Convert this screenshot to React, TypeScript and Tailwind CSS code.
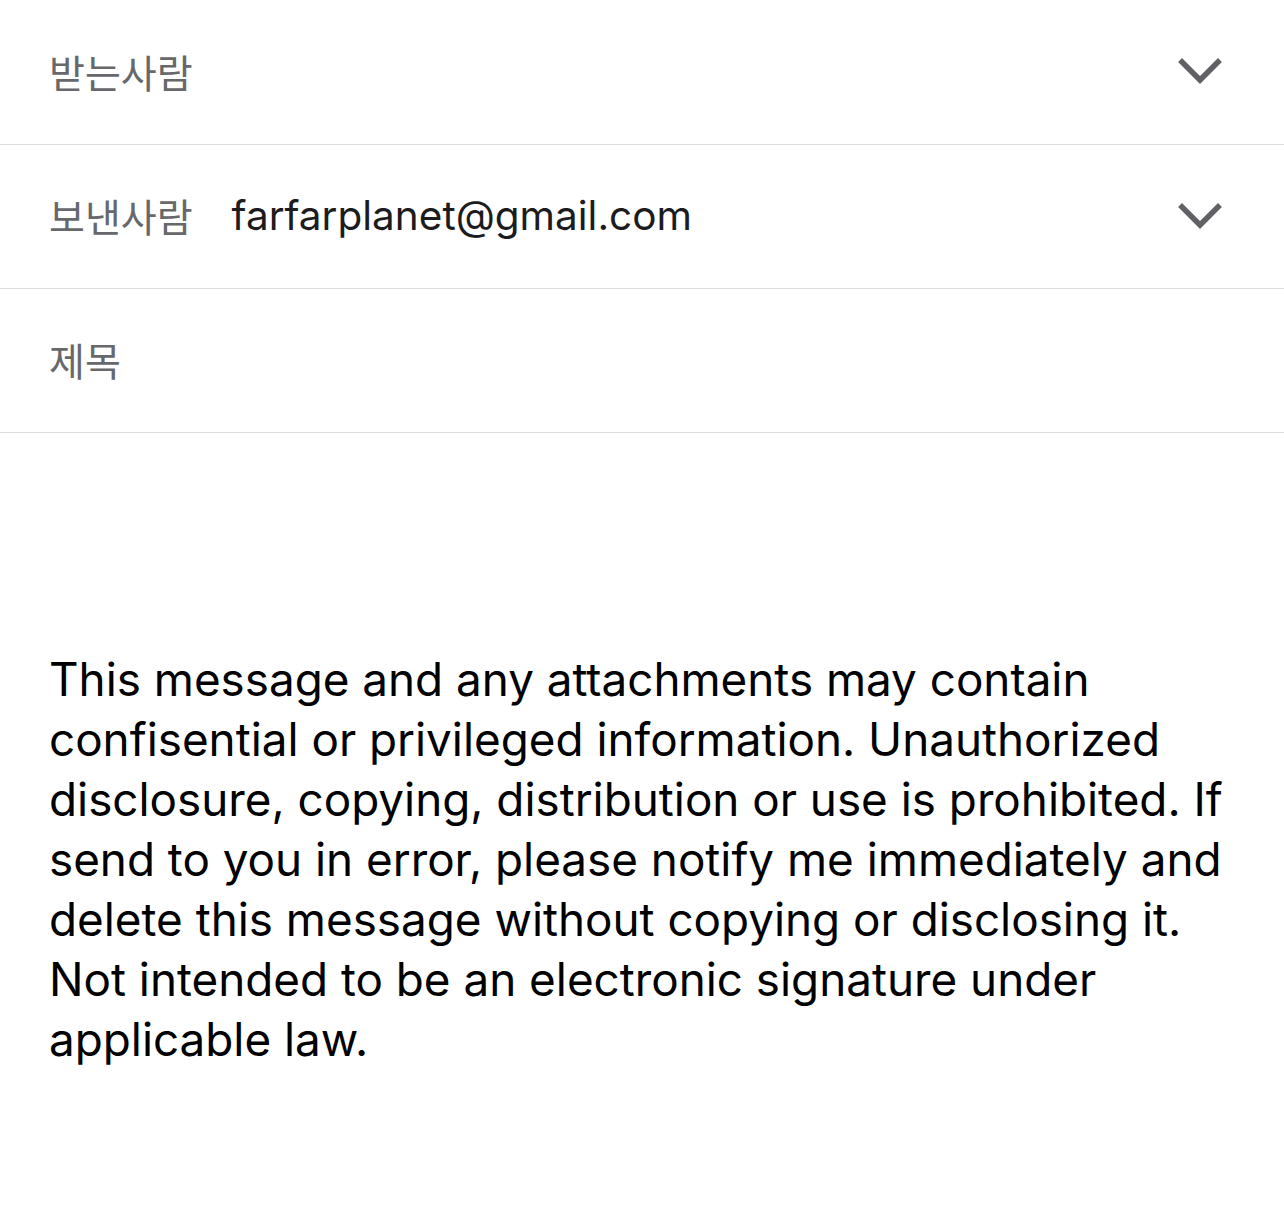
import React from "react";

const Chevron = () => (
  <svg width="44" height="28" viewBox="0 0 44 28" fill="none">
    <path d="M4 4 L22 22 L40 4" stroke="#5f6165" strokeWidth="5.5" strokeLinecap="square" strokeLinejoin="miter" />
  </svg>
);

const labelFont = { fontFamily: '"Noto Sans CJK KR", "Noto Sans", sans-serif' };

const lines = [
  "This message and any attachments may contain",
  "confisential or privileged information. Unauthorized",
  "disclosure, copying, distribution or use is prohibited. If",
  "send to you in error, please notify me immediately and",
  "delete this message without copying or disclosing it.",
  "Not intended to be an electronic signature under",
  "applicable law.",
];

export default function App() {
  return (
    <div className="w-[1284px] h-[1205px] bg-white" style={{ fontFamily: 'Inter, "Noto Sans CJK KR", sans-serif' }}>
      <div className="h-[145px] flex items-center border-b border-[#dedede] pl-[49px] pr-[62px]">
        <span className="text-[39px] text-[#66686c] flex-1 -mt-[2px]" style={labelFont}>받는사람</span>
        <Chevron />
      </div>
      <div className="h-[144px] flex items-center border-b border-[#dedede] pl-[49px] pr-[62px]">
        <span className="text-[39px] text-[#66686c] -mt-[2px]" style={labelFont}>보낸사람</span>
        <span className="ml-[39px] text-[40.5px] text-[#1c1c1e] flex-1">farfarplanet@gmail.com</span>
        <Chevron />
      </div>
      <div className="h-[144px] flex items-center border-b border-[#dedede] pl-[49px] pr-[62px]">
        <span className="text-[39px] text-[#66686c] -mt-[2px]" style={labelFont}>제목</span>
      </div>
      <div className="pl-[49px] pt-[217px] text-[45.8px] leading-[60px] text-black whitespace-nowrap">
        {lines.map((l) => (
          <div key={l}>{l}</div>
        ))}
      </div>
    </div>
  );
}
